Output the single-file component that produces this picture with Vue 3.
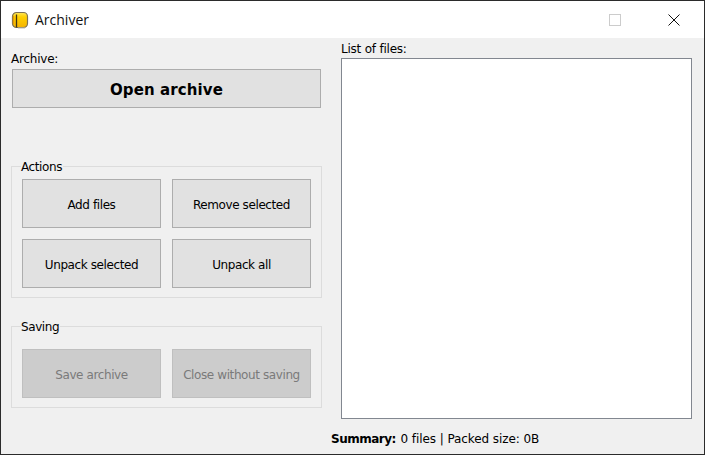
<script setup>
const actions = ['Add files', 'Remove selected', 'Unpack selected', 'Unpack all']
const saving = ['Save archive', 'Close without saving']
</script>

<template>
  <div class="window">
    <header class="titlebar">
      <svg class="app-icon" width="18" height="18" viewBox="0 0 18 18">
        <defs>
          <linearGradient id="iconFill" x1="0" y1="0" x2="0" y2="1">
            <stop offset="0" stop-color="#ffe65c" />
            <stop offset="0.3" stop-color="#ffd000" />
            <stop offset="1" stop-color="#f5b400" />
          </linearGradient>
        </defs>
        <rect x="1.5" y="1.5" width="15" height="15" rx="4" fill="url(#iconFill)" stroke="#7d7254" stroke-width="1.2" />
        <path d="M2.5 5V13" stroke="#e89c00" stroke-width="1.4" fill="none" />
        <path d="M5.5 3.5V16.5" stroke="#3f3414" stroke-width="1.3" fill="none" />
        <path d="M7 17H14" stroke="#c4bea8" stroke-width="1" fill="none" />
      </svg>
      <span class="title">Archiver</span>
      <div class="win-controls">
        <svg class="max-icon" width="12" height="12" viewBox="0 0 12 12">
          <rect x="0.5" y="0.5" width="11" height="11" fill="none" stroke="#cccccc" />
        </svg>
        <svg class="close-icon" width="12" height="12" viewBox="0 0 12 12">
          <path d="M0.5 0.5L11.5 11.5M11.5 0.5L0.5 11.5" stroke="#111111" fill="none" />
        </svg>
      </div>
    </header>
    <main class="content">
      <section class="left">
        <label class="archive-label">Archive:</label>
        <button class="open-btn">Open archive</button>
        <fieldset class="group actions">
          <legend>Actions</legend>
          <div class="btn-grid">
            <button v-for="a in actions" :key="a" class="btn">{{ a }}</button>
          </div>
        </fieldset>
        <fieldset class="group saving">
          <legend>Saving</legend>
          <div class="btn-grid">
            <button v-for="s in saving" :key="s" class="btn" disabled>{{ s }}</button>
          </div>
        </fieldset>
      </section>
      <section class="right">
        <label class="list-label">List of files:</label>
        <div class="file-list"></div>
        <p class="summary"><b>Summary:</b> 0 files | Packed size: 0B</p>
      </section>
    </main>
  </div>
</template>

<style>
html, body { margin: 0; padding: 0; background: #f0f0f0; }
</style>

<style scoped>
.window {
  box-sizing: border-box;
  width: 705px;
  height: 455px;
  border: 1px solid #2b2b2b;
  background: #f0f0f0;
  display: flex;
  flex-direction: column;
  overflow: hidden;
  font-family: "DejaVu Sans", Tahoma, sans-serif;
  font-size: 12px;
  letter-spacing: -0.22px;
  color: #000;
}
.titlebar {
  height: 37px;
  flex: none;
  background: #fff;
  display: flex;
  align-items: center;
  padding-left: 10px;
}
.app-icon { flex: none; }
.title {
  margin-left: 6px;
  font-family: "Open Sans", sans-serif;
  font-size: 14px;
  letter-spacing: 0;
  color: #111;
}
.win-controls {
  margin-left: auto;
  display: flex;
  align-items: center;
  gap: 47px;
  padding-right: 24px;
}
.content {
  flex: 1;
  display: flex;
  min-height: 0;
}
.left {
  width: 311px;
  margin-left: 10px;
  flex: none;
  display: flex;
  flex-direction: column;
}
.archive-label {
  margin-top: 14px;
  height: 17px;
  line-height: 14px;
}
.open-btn {
  box-sizing: border-box;
  margin-left: 1px;
  width: 309px;
  height: 39px;
  border: 1px solid #adadad;
  background: #e1e1e1;
  font: bold 15px "DejaVu Sans", sans-serif;
  letter-spacing: 0.1px;
  color: #000;
  padding: 3px 0 0;
}
.group {
  box-sizing: border-box;
  margin: 0;
  width: 311px;
  border: 1px solid #dcdcdc;
  padding: 0 10px 9px;
  min-width: 0;
}
.group legend {
  margin-left: -1px;
  padding: 0 1px 0 0;
  line-height: 16px;
  height: 14px;
  letter-spacing: -0.4px;
}
.actions { margin-top: 51px; }
.saving { margin-top: 21px; }
.saving .btn-grid { margin-top: 16px; }
.btn-grid {
  display: grid;
  grid-template-columns: 139px 139px;
  grid-auto-rows: 49px;
  gap: 11px;
  margin-top: 6px;
}
.btn {
  box-sizing: border-box;
  border: 1px solid #adadad;
  background: #e1e1e1;
  font: 12px "DejaVu Sans", sans-serif;
  letter-spacing: -0.4px;
  color: #000;
  padding: 3px 0 0;
}
.btn:disabled {
  background: #cccccc;
  border-color: #bfbfbf;
  color: #7a7a7a;
}
.right {
  flex: 1;
  display: flex;
  flex-direction: column;
  margin-left: 9px;
}
.list-label {
  margin: 4px 0 0 10px;
  height: 16px;
  line-height: 14px;
}
.file-list {
  box-sizing: border-box;
  margin-left: 10px;
  width: 351px;
  height: 361px;
  background: #fff;
  border: 1px solid #828790;
}
.summary {
  margin: 13px 0 0;
  line-height: 14px;
  letter-spacing: -0.08px;
}
.summary b {
  letter-spacing: -0.5px;
  margin-right: 1px;
}
</style>
